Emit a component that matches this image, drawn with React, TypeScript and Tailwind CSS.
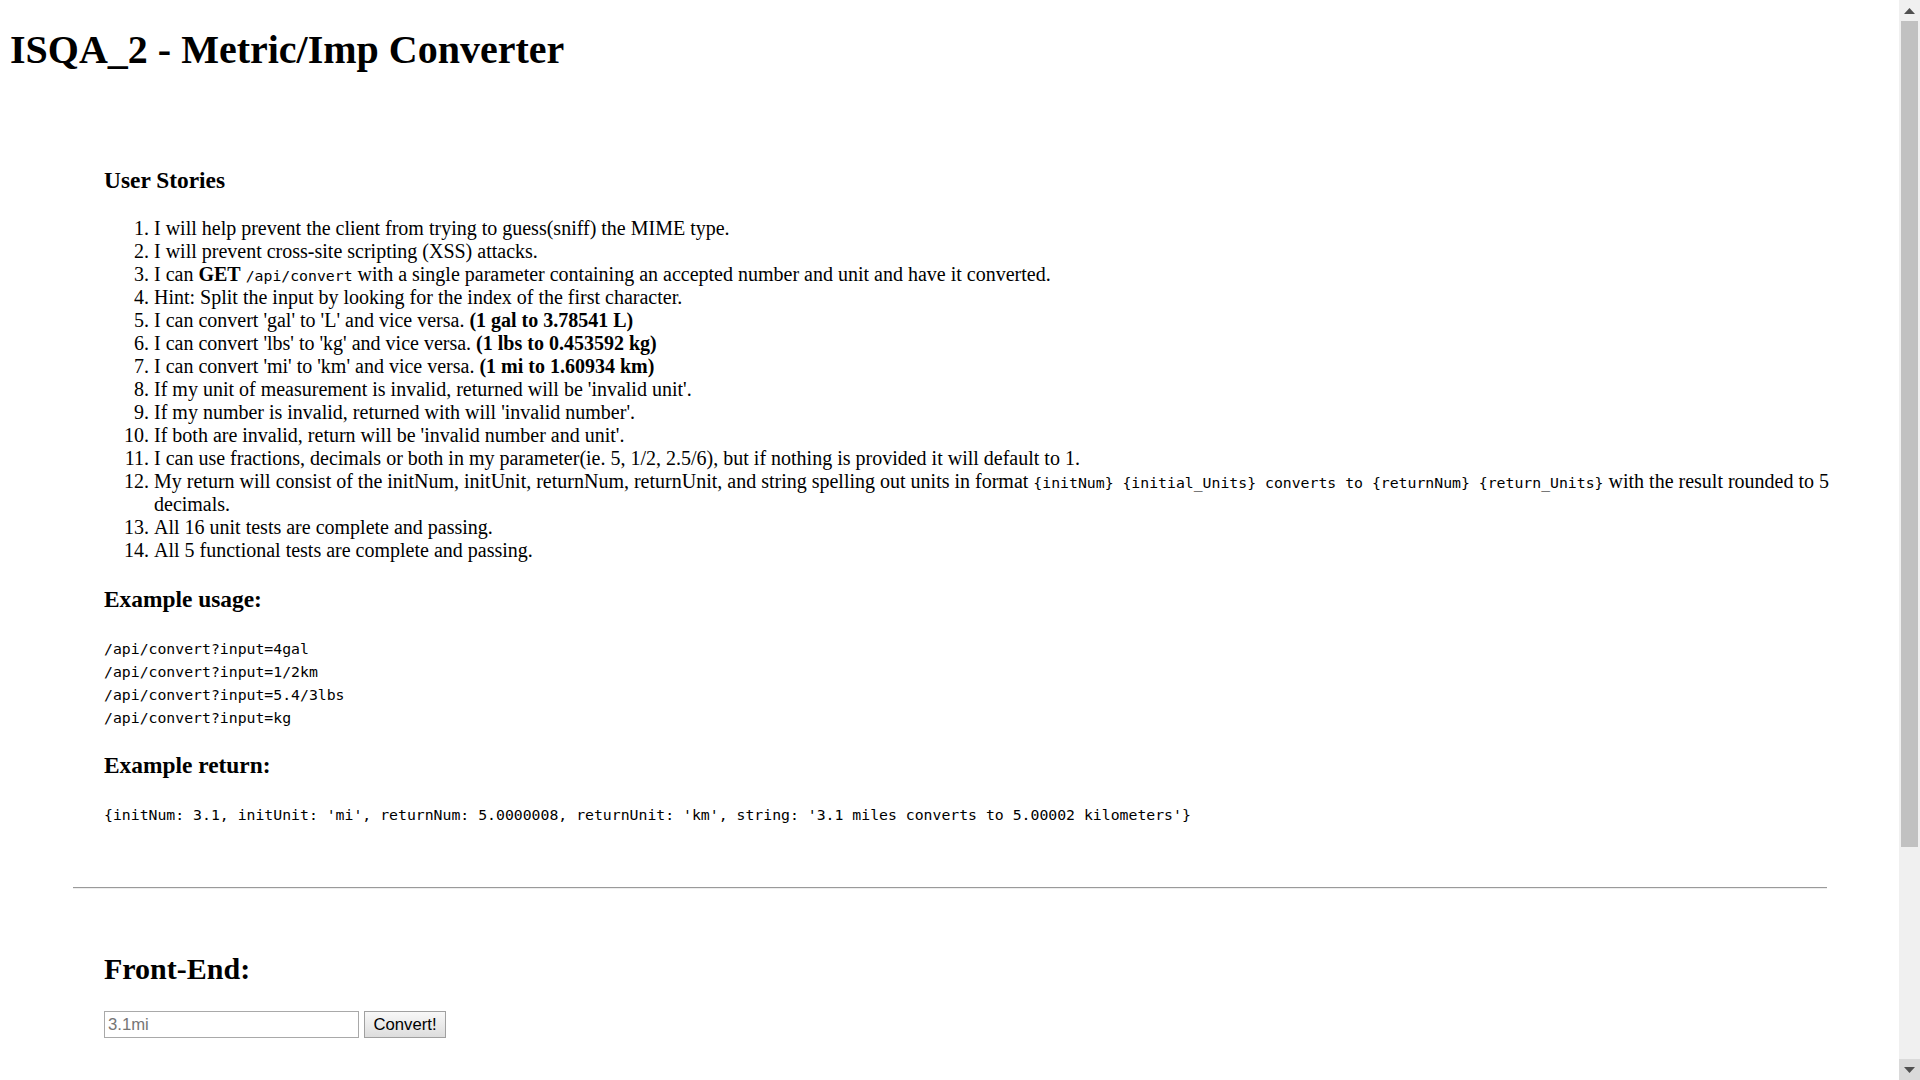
import React from "react";

const serif = { fontFamily: '"Liberation Serif", "Times New Roman", serif' };
const mono = { fontFamily: '"DejaVu Sans Mono", "Liberation Mono", monospace' };
const sans = { fontFamily: '"Liberation Sans", Arial, sans-serif' };

function Code({ children }: { children: React.ReactNode }) {
  return (
    <code className="text-[14.8px] leading-none" style={mono}>
      {children}
    </code>
  );
}

const stories: React.ReactNode[] = [
  <>I will help prevent the client from trying to guess(sniff) the MIME type.</>,
  <>I will prevent cross-site scripting (XSS) attacks.</>,
  <>
    I can <b>GET</b> <Code>/api/convert</Code> with a single parameter containing an accepted number and unit and have it converted.
  </>,
  <>Hint: Split the input by looking for the index of the first character.</>,
  <>
    I can convert 'gal' to 'L' and vice versa. <b>(1 gal to 3.78541 L)</b>
  </>,
  <>
    I can convert 'lbs' to 'kg' and vice versa. <b>(1 lbs to 0.453592 kg)</b>
  </>,
  <>
    I can convert 'mi' to 'km' and vice versa. <b>(1 mi to 1.60934 km)</b>
  </>,
  <>If my unit of measurement is invalid, returned will be 'invalid unit'.</>,
  <>If my number is invalid, returned with will 'invalid number'.</>,
  <>If both are invalid, return will be 'invalid number and unit'.</>,
  <>I can use fractions, decimals or both in my parameter(ie. 5, 1/2, 2.5/6), but if nothing is provided it will default to 1.</>,
  <>
    My return will consist of the initNum, initUnit, returnNum, returnUnit, and string spelling out units in format{" "}
    <Code>{"{initNum} {initial_Units} converts to {returnNum} {return_Units}"}</Code> with the result rounded to 5 decimals.
  </>,
  <>All 16 unit tests are complete and passing.</>,
  <>All 5 functional tests are complete and passing.</>,
];

const examples = [
  "/api/convert?input=4gal",
  "/api/convert?input=1/2km",
  "/api/convert?input=5.4/3lbs",
  "/api/convert?input=kg",
];

function Scrollbar() {
  return (
    <div className="flex h-[1080px] w-[21px] shrink-0 flex-col bg-[#f0f0f0]">
      <div className="flex h-[21px] items-center justify-center">
        <svg width="11" height="6" viewBox="0 0 11 6">
          <polygon points="5.5,0 11,6 0,6" fill="#505050" />
        </svg>
      </div>
      <div className="mx-[2px] h-[826px] bg-[#c1c1c1]" />
      <div className="flex-1" />
      <div className="flex h-[21px] items-center justify-center bg-[#dadada]">
        <svg width="11" height="6" viewBox="0 0 11 6">
          <polygon points="0,0 11,0 5.5,6" fill="#505050" />
        </svg>
      </div>
    </div>
  );
}

export default function App() {
  return (
    <div className="flex h-[1080px] w-[1920px] overflow-hidden bg-white text-black">
      <div className="flex min-w-0 flex-1 flex-col px-[10px]" style={serif}>
        <header>
          <h1 className="mt-[27px] text-[40px] font-bold leading-[46px]">ISQA_2 - Metric/Imp Converter</h1>
        </header>

        <div className="ml-[94px] mt-[94px] flex flex-col">
          <h3 className="text-[23.4px] font-bold leading-[27px]">User Stories</h3>
          <ol className="mt-[23.4px] list-decimal pl-[50px] text-[20px] leading-[23px]">
            {stories.map((s, i) => (
              <li key={i} className="leading-[23px]">
                {s}
              </li>
            ))}
          </ol>

          <h3 className="mt-[23.4px] text-[23.4px] font-bold leading-[27px]">Example usage:</h3>
          <div className="mt-[23.4px] flex flex-col">
            {examples.map((e) => (
              <div key={e} className="h-[23px] text-[20px] leading-[23px]">
                <Code>{e}</Code>
              </div>
            ))}
          </div>

          <h3 className="mt-[23.4px] text-[23.4px] font-bold leading-[27px]">Example return:</h3>
          <div className="mt-[23.4px] h-[23px] text-[20px] leading-[23px]">
            <Code>
              {"{initNum: 3.1, initUnit: 'mi', returnNum: 5.0000008, returnUnit: 'km', string: '3.1 miles converts to 5.00002 kilometers'}"}
            </Code>
          </div>
        </div>

        <div className="mx-[62.5px] mt-[62.5px] h-[2px] border-t border-b border-t-[#9a9a9a] border-b-[#eeeeee]" />

        <div className="ml-[94px] mt-[62.5px] flex flex-col">
          <h2 className="text-[30px] font-bold leading-[34.5px]">Front-End:</h2>
          <form className="mt-[25px] flex items-center gap-[5px]" onSubmit={(e) => e.preventDefault()}>
            <input
              type="text"
              placeholder="3.1mi"
              className="h-[27px] w-[255px] border border-[#a9a9a9] bg-white px-[3px] text-[16.7px] text-black placeholder:text-[#757575] outline-none"
              style={sans}
            />
            <button
              type="submit"
              className="h-[27px] w-[82px] border border-[#a0a0a0] bg-gradient-to-b from-[#f8f8f8] to-[#dddddd] text-[16.7px] leading-[25px] text-black"
              style={sans}
            >
              Convert!
            </button>
          </form>
        </div>
      </div>
      <Scrollbar />
    </div>
  );
}
